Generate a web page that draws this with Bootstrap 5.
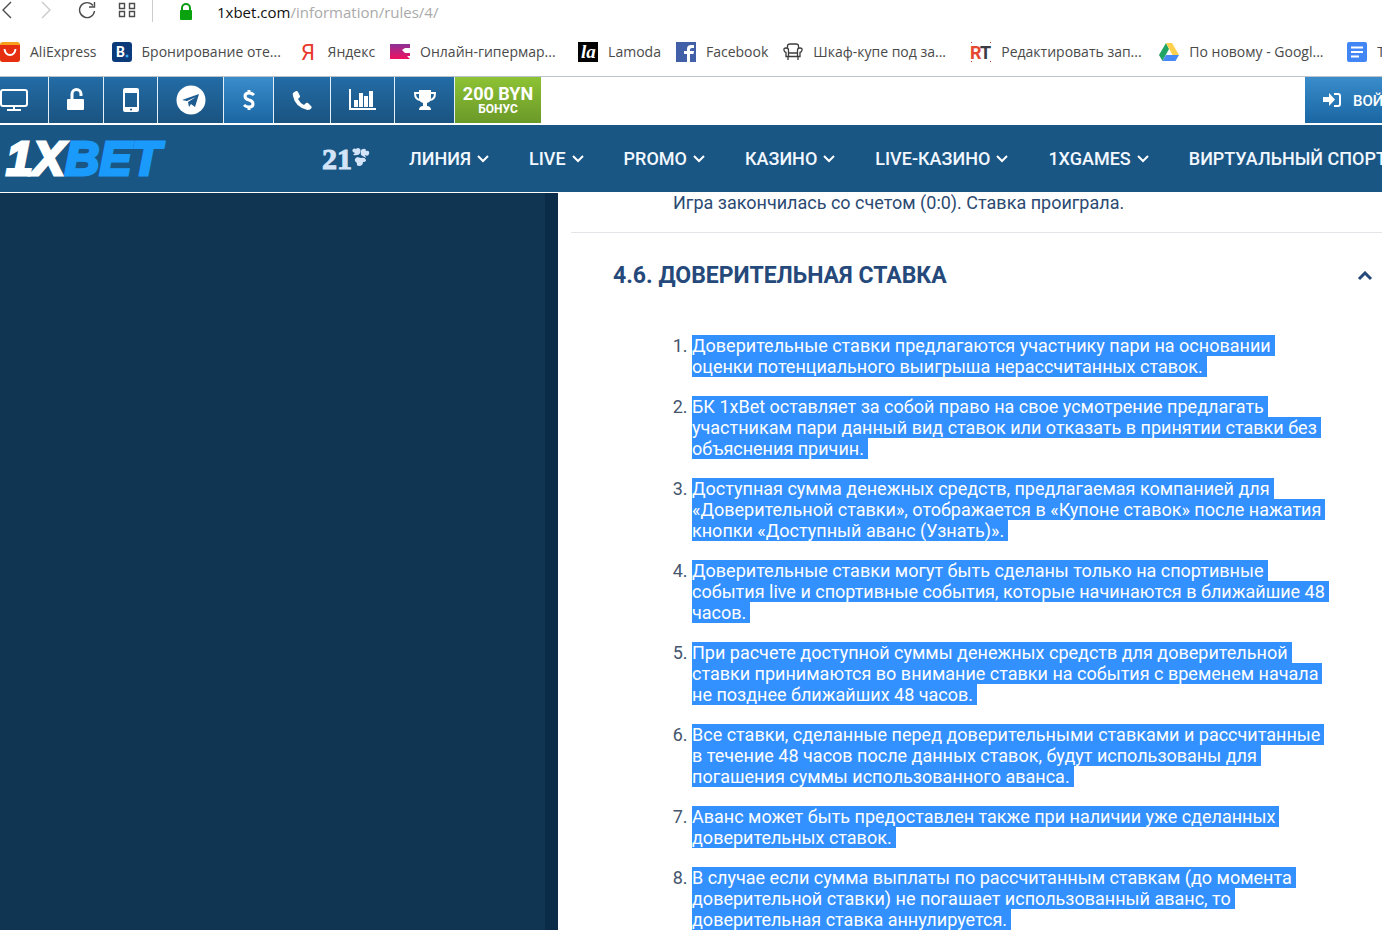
<!DOCTYPE html>
<html lang="ru">
<head>
<meta charset="utf-8">
<meta name="viewport" content="width=device-width, initial-scale=1">
<title>4.6. Доверительная ставка</title>
<link href="https://cdn.jsdelivr.net/npm/bootstrap@5.3.0/dist/css/bootstrap.min.css" rel="stylesheet">
<style>
body{font-family:Roboto,"Liberation Sans",sans-serif;color:#2b4a72;background:#fff}
svg{flex:none;display:block}
a{color:inherit;text-decoration:none}
.chrome{font-family:"Open Sans","Noto Sans",sans-serif;color:#4a4a4a;border-bottom:1px solid #b9c3c9}
.address{height:28px;padding-left:217px;position:relative}
.address-icons{position:absolute;left:0;top:0}
.url{font-size:15px;line-height:25px;color:#aaa}
.url b{font-weight:400;color:#111}
.marks{height:48px;gap:15px;font-size:14px;line-height:20px}
.marks a{display:flex;align-items:center;gap:10px;flex:none;white-space:nowrap}
.marks .cut span{width:143px}
.tools{height:46px}
.tool{border:0;border-right:1px solid #e4eef6;background:linear-gradient(#236ca6,#1a5380);color:#fff;padding:0;display:flex;align-items:center;justify-content:center;flex:none}
.tool.lit,.login{background:linear-gradient(#3a8ccb,#1a66a3)}
.w48{width:49px}.w54{width:54px}.w55{width:55px}.w66{width:66px}.w50{width:50px}.w57{width:57px}.w64{width:64px}.w60{width:60px}
.w48 svg{margin-left:-20px}
.bonus{width:86px;border:0;padding:0;background:linear-gradient(#8dc234,#6b9929);color:#fff;font-weight:700;font-size:18px;line-height:18px}
.bonus span{display:block;font-size:12px;line-height:12px}
.bonus span:first-child{font-size:18px;line-height:18px}
.login{width:77px;border:0;color:#fff;font-size:15px;font-weight:500;padding:0 0 0 18px;gap:12px;white-space:nowrap;overflow:hidden}
.login span{padding-top:2px}
.mainnav{height:67px;margin-top:2px;margin-bottom:1px;background:#1a5684;color:#f2f8ff}
.brand{width:322px;padding-left:6px;flex:none;font:italic 700 48px/56px "Liberation Sans",sans-serif;color:#fff;-webkit-text-stroke:3px currentColor}
.brand span{color:#1a9bfc}
.club{width:87px;flex:none;font:700 30px/36px "Liberation Serif",serif;color:#d3e4f8;-webkit-text-stroke:1px currentColor}
.club svg{margin-bottom:4px}
.menu{gap:40px;font-size:18px;font-weight:500;line-height:22px}
.menu a{display:flex;align-items:center;gap:6px;white-space:nowrap;flex:none}
.side{flex:0 0 558px;background:#0f3553;border-right:13px solid #0b2c48}
.rules{flex:1 1 0;min-width:0;padding-left:13px}
.prev{font-size:18px;line-height:20px;padding:0 0 19px 102px;margin:0;border-bottom:1px solid #e3e5e8}
.rule-head{padding:27px 9px 0 42px}
.rule-head h2{font-size:23px;line-height:32px;font-weight:700;color:#25497a;margin:0}
.rule-list{margin:43px 0 0;padding-left:121px;max-width:759px;font-size:18px;line-height:21px}
.rule-list li{margin-bottom:19px}
.rule-list li::marker{color:#45566e}
.rule-list span{background:#3390ff;color:#fff;padding-right:4px;-webkit-box-decoration-break:clone;box-decoration-break:clone}
</style>
</head>
<body class="vh-100 overflow-hidden d-flex flex-column">
<header class="flex-shrink-0">
<div class="chrome">
 <div class="address">
  <svg class="address-icons" width="200" height="24" fill="none" stroke="#4c4c4c" stroke-width="1.4"><path d="M11 2 3 10l8 8"/><path stroke="#c9c9c9" d="m42 2 8 8-8 8"/><path d="M93 5.500A7.500 7.500 0 1 0 94.500 11M94.500 2v5H89"/><path d="M119.500 3.500h5v5h-5zM129.500 3.500h5v5h-5zM119.500 11.500h5v5h-5zM129.500 11.500h5v5h-5z"/><path stroke="#ccc" stroke-width="1" d="M152.500 0v22"/><path stroke="#0a9c14" stroke-width="2" d="M182 11V8a4 4 0 0 1 8 0v3"/><rect x="180" y="10" width="12" height="10" rx="1" fill="#0aa30f" stroke="none"/></svg>
  <div class="url"><b>1xbet.com</b>/information/rules/4/</div>
 </div>
 <nav class="marks d-flex align-items-center overflow-hidden" aria-label="Закладки">
  <a href="#"><svg width="20" height="20"><rect width="20" height="20" rx="3" fill="#f8a01b"/><path d="M0 3h20v14q0 3-3 3H3q-3 0-3-3z" fill="#e62e11"/><path d="M4.500 7c1 8 10 8 11 0" fill="none" stroke="#fff" stroke-width="2"/></svg><span>AliExpress</span></a>
  <a href="#" class="cut"><svg width="20" height="20"><rect width="20" height="20" rx="3" fill="#0c3b7c"/><text x="4" y="15" font-size="14" font-weight="700" fill="#fff" font-family="Roboto,sans-serif">B</text><circle cx="15" cy="14" r="1.500" fill="#39a9f0"/></svg><span>Бронирование оте...</span></a>
  <a href="#"><svg width="18" height="20" overflow="visible"><text x="1" y="18" font-size="22" fill="#e8372a" font-family="Roboto,sans-serif">Я</text></svg><span>Яндекс</span></a>
  <a href="#" class="cut"><svg width="20" height="20"><defs><linearGradient id="oz" x2="0" y2="1"><stop stop-color="#8c3198"/><stop offset="1" stop-color="#f0115e"/></linearGradient></defs><path d="M0 2h20v4h-5l-3 2 3 3h5v3h-3l3 3H0z" fill="url(#oz)"/></svg><span>Онлайн-гипермар...</span></a>
  <a href="#"><svg width="20" height="20"><path d="M0 0h20v20H0z"/><text x="3" y="16" font-size="19" font-style="italic" font-weight="700" fill="#fff" font-family="Liberation Serif,serif">la</text></svg><span>Lamoda</span></a>
  <a href="#"><svg width="20" height="20"><path d="M0 0h20v20H0z" fill="#4160a8"/><path d="M11 20v-8H8V9h3V7q0-4 4-4h3v3h-2q-2 0-2 1.500V9h4l-.5 3H14v8z" fill="#fff"/></svg><span>Facebook</span></a>
  <a href="#" class="cut"><svg width="20" height="20" fill="none" stroke="#3c3c3c" stroke-width="1.300"><path d="M4.500 6V4q0-2 2.500-2h6q2.500 0 2.500 2v2M5.500 11h9M5.500 14.500h9M5.500 14.500V8q0-2-2.500-2T1 8q0 2 2 2.500v4h2.500M14.500 14.500V8q0-2 2.500-2t2 2q0 2-2 2.500v4h-2.500M5 15v3M15 15v3"/></svg><span>Шкаф-купе под за...</span></a>
  <a href="#" class="cut"><svg width="20" height="20" font-family="Roboto,sans-serif" font-size="18" font-weight="700" overflow="visible"><text x="-1" y="17" fill="#e44832">R</text><text x="9" y="17" fill="#3b3b46">T</text><path d="M0 0h1v1H0zM19 0h1v1h-1zM0 19h1v1H0zM19 19h1v1h-1z" fill="#b33"/></svg><span>Редактировать зап...</span></a>
  <a href="#" class="cut"><svg width="20" height="20"><path d="M7 1 0 13l3.500 6L10 7z" fill="#1fa463"/><path d="M7 1h6l7 12h-6.500z" fill="#ffd04b"/><path d="M7 13h13l-3.500 6h-13z" fill="#4688f4"/></svg><span>По новому - Googl...</span></a>
  <a href="#"><svg width="20" height="20"><rect width="20" height="20" rx="2" fill="#4285f4"/><path d="M4 5.500h12M4 10h12M4 14.500h8" stroke="#fff" stroke-width="2"/></svg><span>Т</span></a>
 </nav>
</div>
<div class="tools d-flex">
 <button class="tool w48" aria-label="Компьютер"><svg width="28" height="24" fill="none" stroke="#fff" stroke-width="2"><rect x="1" y="2" width="26" height="16" rx="2"/><path d="M14 18v4M7 22h14"/></svg></button>
 <button class="tool w55" aria-label="Доступ"><svg width="20" height="26"><path d="M6 13V7a4 4 0 0 1 9 0v2" fill="none" stroke="#fff" stroke-width="3"/><rect x="1" y="12" width="17" height="11" rx="1" fill="#fff"/></svg></button>
 <button class="tool w54" aria-label="Мобильный"><svg width="16" height="26"><path fill="#fff" fill-rule="evenodd" d="M2 1h12q2 0 2 2v20q0 2-2 2H2q-2 0-2-2V3q0-2 2-2zm0 5v14h12V6zm6 15.500a1 1 0 1 0 .1 0z"/></svg></button>
 <button class="tool w66" aria-label="Telegram"><svg width="30" height="30"><circle cx="15" cy="15" r="14.500" fill="#fff"/><path d="M6 15 23 9l-4 13-4-3-2 3-1-5 8-5-9 4z" fill="#1d5c90"/></svg></button>
 <button class="tool lit w50" aria-label="Платежи"><svg width="14" height="24" fill="none" stroke="#fff" stroke-width="3"><path d="M12 7Q10 5 7 5 3 5 3 8q0 3 4 4t4 4q0 3-4 3-3 0-5-2M7 2v3M7 19v3"/></svg></button>
 <button class="tool w57" aria-label="Телефон"><svg width="20" height="20"><path d="M1 3 4 1q1-.5 2 1l2 4q.5 1-1 2l-1 1q2 4 6 6l2-2q1-.5 2 0l3 3q1 .5.500 2-1 2-4 2Q3 17 1 6q-.5-2 0-3z" fill="#fff"/></svg></button>
 <button class="tool w64" aria-label="Статистика"><svg width="28" height="22"><path d="M1 0v20h26" fill="none" stroke="#fff" stroke-width="2"/><path d="M5 11h4v7H5zM10 4h4v14h-4zM15 7h4v11h-4zM20 2h4v16h-4z" fill="#fff"/></svg></button>
 <button class="tool w60" aria-label="Турниры"><svg width="24" height="22"><path d="M6 1h12v8q0 4-4 5v3q3 0 4 3v1H6v-1q1-3 4-3v-3q-4-1-4-5z" fill="#fff"/><path d="M6 4H2q0 7 6 7M18 4h4q0 7-6 7" fill="none" stroke="#fff" stroke-width="2"/></svg></button>
 <button class="bonus"><span>200 BYN</span><span>БОНУС</span></button>
 <button class="login d-flex align-items-center ms-auto"><svg width="18" height="14"><path d="M0 4h6V0l6 6.500L6 13V9H0z" fill="#fff"/><path d="M11 1h4q2 0 2 2v8q0 2-2 2h-4" fill="none" stroke="#fff" stroke-width="2"/></svg><span>ВОЙТИ</span></button>
</div>
<nav class="mainnav d-flex align-items-center overflow-hidden">
 <a href="#" class="brand">1X<span>BET</span></a>
 <a href="#" class="club d-flex align-items-center">21<svg width="18" height="20" fill="#d3e4f8" stroke="none"><path d="M8 6Q7 9 1 8l2-2Q-1 5 1 2q2-1 3 0 2-2 4 0 1 1 0 4zM9 8q-1-6 2-6 3-1 3 2 4-1 3 3-1 3-4 1l1 3zM5 10l4 1q4-1 5 2 0 2-3 2 0 4-4 4-3 0-2-3-3-2-2-4 1-1 2-2z"/></svg></a>
 <div class="menu d-flex">
  <a href="#">ЛИНИЯ <svg width="12" height="8" fill="none" stroke="#fff" stroke-width="2"><path d="m1 1 5 5 5-5"/></svg></a>
  <a href="#">LIVE <svg width="12" height="8" fill="none" stroke="#fff" stroke-width="2"><path d="m1 1 5 5 5-5"/></svg></a>
  <a href="#">PROMO <svg width="12" height="8" fill="none" stroke="#fff" stroke-width="2"><path d="m1 1 5 5 5-5"/></svg></a>
  <a href="#">КАЗИНО <svg width="12" height="8" fill="none" stroke="#fff" stroke-width="2"><path d="m1 1 5 5 5-5"/></svg></a>
  <a href="#">LIVE-КАЗИНО <svg width="12" height="8" fill="none" stroke="#fff" stroke-width="2"><path d="m1 1 5 5 5-5"/></svg></a>
  <a href="#">1XGAMES <svg width="12" height="8" fill="none" stroke="#fff" stroke-width="2"><path d="m1 1 5 5 5-5"/></svg></a>
  <a href="#">ВИРТУАЛЬНЫЙ СПОРТ</a>
 </div>
</nav>
</header>
<div class="d-flex flex-fill overflow-hidden">
 <aside class="side"></aside>
 <main class="rules">
  <p class="prev">Игра закончилась со счетом (0:0). Ставка проиграла.</p>
  <div class="rule-head d-flex align-items-center justify-content-between">
   <h2>4.6. ДОВЕРИТЕЛЬНАЯ СТАВКА</h2>
   <svg width="16" height="10" fill="none" stroke="#25497a" stroke-width="3"><path d="m2 8 6-6 6 6"/></svg>
  </div>
  <ol class="rule-list">
   <li><span>Доверительные ставки предлагаются участнику пари на основании оценки потенциального выигрыша нерассчитанных ставок.</span></li>
   <li><span>БК 1xBet оставляет за собой право на свое усмотрение предлагать участникам пари данный вид ставок или отказать в принятии ставки без объяснения причин.</span></li>
   <li><span>Доступная сумма денежных средств, предлагаемая компанией для «Доверительной ставки», отображается в «Купоне ставок» после нажатия кнопки «Доступный аванс (Узнать)».</span></li>
   <li><span>Доверительные ставки могут быть сделаны только на спортивные события live и спортивные события, которые начинаются в ближайшие 48 часов.</span></li>
   <li><span>При расчете доступной суммы денежных средств для доверительной ставки принимаются во внимание ставки на события с временем начала не позднее ближайших 48 часов.</span></li>
   <li><span>Все ставки, сделанные перед доверительными ставками и рассчитанные в течение 48 часов после данных ставок, будут использованы для погашения суммы использованного аванса.</span></li>
   <li><span>Аванс может быть предоставлен также при наличии уже сделанных доверительных ставок.</span></li>
   <li><span>В случае если сумма выплаты по рассчитанным ставкам (до момента доверительной ставки) не погашает использованный аванс, то доверительная ставка аннулируется.</span></li>
  </ol>
 </main>
</div>
<script src="https://cdn.jsdelivr.net/npm/bootstrap@5.3.0/dist/js/bootstrap.bundle.min.js"></script>
</body>
</html>
